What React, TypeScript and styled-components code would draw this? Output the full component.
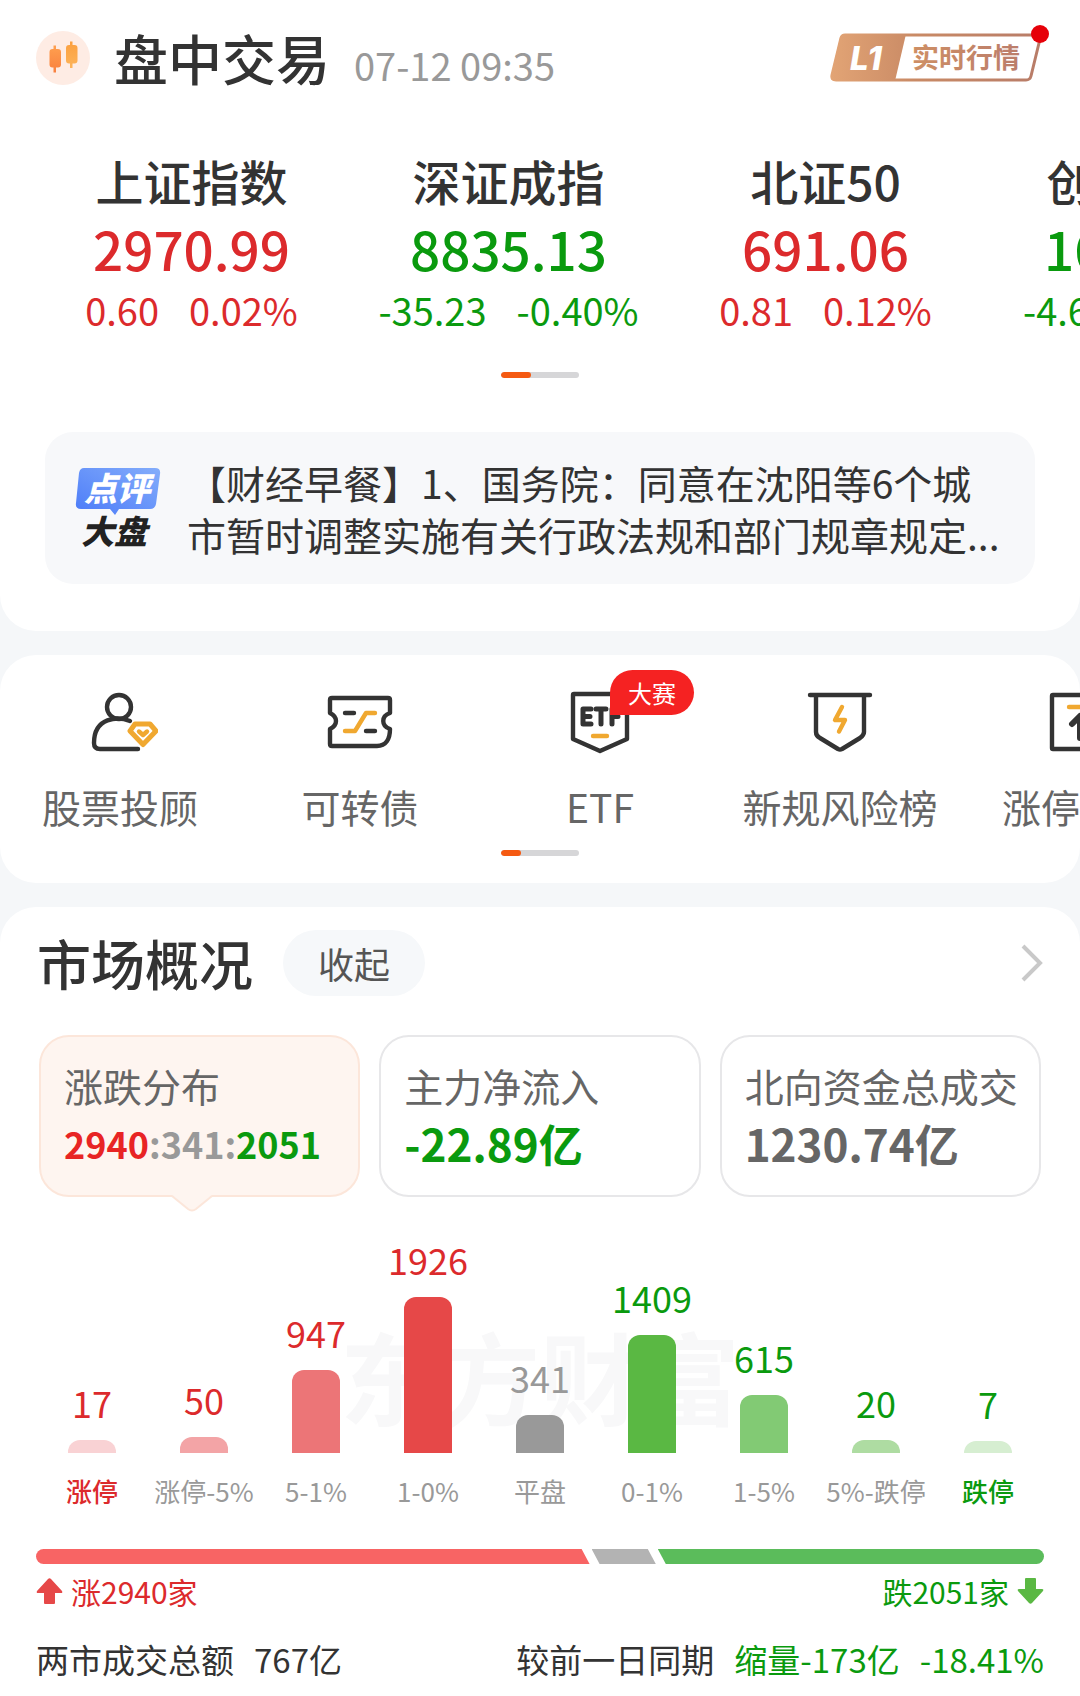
import React, { useState } from "react";
import styled, { createGlobalStyle } from "styled-components";

const RED = "#dc2a2c";
const GREEN = "#0a9a0e";
const INK = "#333333";
const GRAY = "#999999";

const toneColor = { up: RED, down: GREEN, flat: GRAY };
type Tone = keyof typeof toneColor;

const GlobalStyle = createGlobalStyle`
  *, *::before, *::after { box-sizing: border-box; }
  body {
    margin: 0;
    background: #f5f7f9;
    color: ${INK};
    font-family: "Noto Sans CJK SC", "Noto Sans", sans-serif;
    overflow-x: hidden;
  }
  button {
    font: inherit;
    color: inherit;
    background: none;
    border: 0;
    padding: 0;
    margin: 0;
    cursor: pointer;
  }
  a { color: inherit; text-decoration: none; }
  h1, h2, p, ul { margin: 0; padding: 0; }
  ul { list-style: none; }
  svg { display: block; flex: none; }
`;

const Page = styled.main`
  display: flex;
  flex-direction: column;
  gap: 24px;
`;

const Card = styled.section<{ $top?: boolean; $last?: boolean }>`
  background: #ffffff;
  overflow: hidden;
  border-radius: ${(p) => (p.$top ? "0 0 36px 36px" : p.$last ? "36px 36px 0 0" : "36px")};
`;

const Header = styled.header`
  display: flex;
  align-items: center;
  padding: 20px 36px 0;
  height: 96px;
`;

const HeaderText = styled.div`
  display: flex;
  align-items: baseline;
  gap: 24px;
  margin-left: 24px;
  flex: 1;
`;

const Title = styled.h1`
  font-size: 54px;
  line-height: 72px;
  font-weight: 500;
`;

const SectionTitle = styled(Title).attrs({ as: "h2" })``;

const Time = styled.time`
  font-size: 38px;
  line-height: 56px;
  color: ${GRAY};
`;

const LevelButton = styled.button`
  margin-right: -6px;
`;

const Scroller = styled.ul`
  display: flex;
  overflow-x: auto;
  scrollbar-width: none;
  &::-webkit-scrollbar { display: none; }
`;

const IndexScroller = styled(Scroller)`
  padding-left: 33px;
  margin-top: 50px;
`;

const IndexItem = styled.li`
  flex: 0 0 317px;
`;

const IndexLink = styled.a<{ $tone: Tone }>`
  display: flex;
  flex-direction: column;
  align-items: center;
  color: ${(p) => toneColor[p.$tone]};
`;

const IndexName = styled.span`
  font-size: 48px;
  line-height: 68px;
  font-weight: 500;
  color: ${INK};
`;

const IndexValue = styled.span`
  font-size: 53px;
  line-height: 68px;
  font-weight: 500;
`;

const IndexChange = styled.span`
  display: flex;
  gap: 30px;
  font-size: 38px;
  line-height: 56px;
`;

const Pager = styled.div<{ $space: number }>`
  width: 78px;
  height: 6px;
  margin: ${(p) => p.$space}px auto 0;
  border-radius: 3px;
  background: #d6d6d8;
  overflow: hidden;
`;

const PagerThumb = styled.div<{ $width: number }>`
  width: ${(p) => p.$width}px;
  height: 6px;
  border-radius: 3px;
  background: #f55a12;
`;

const News = styled.a`
  display: flex;
  align-items: center;
  gap: 24px;
  margin: 54px 45px 47px;
  padding: 24px 26px 24px 28px;
  border-radius: 28px;
  background: #f7f8fa;
`;

const NewsText = styled.p`
  flex: 1;
  min-width: 0;
  max-width: 820px;
  font-size: 39px;
  line-height: 52px;
  text-spacing-trim: space-all;
`;

const NavItem = styled.li`
  flex: 0 0 240px;
`;

const NavLink = styled.a`
  position: relative;
  display: flex;
  flex-direction: column;
  align-items: center;
  padding-top: 31px;
`;

const NavLabel = styled.span`
  margin-top: 16px;
  font-size: 39px;
  line-height: 56px;
  color: #666666;
  white-space: nowrap;
`;

const NavBadge = styled.span`
  position: absolute;
  top: 15px;
  left: 130px;
  width: 84px;
  border-radius: 23px 23px 23px 0;
  background: #f52222;
  color: #ffffff;
  font-size: 24px;
  line-height: 45px;
  text-align: center;
`;

const SectionHead = styled.div`
  display: flex;
  align-items: center;
  padding: 20px 36px 0 37px;
`;

const Fold = styled.button`
  margin-left: 30px;
  padding: 0 35px;
  border-radius: 33px;
  background: #f6f8fa;
  color: #555555;
  font-size: 36px;
  line-height: 66px;
`;

const MoreLink = styled.a`
  margin-left: auto;
`;

const Tabs = styled.div`
  display: grid;
  grid-template-columns: repeat(3, 1fr);
  gap: 19px;
  padding: 36px 39px 0;
`;

const Tab = styled.button<{ $active: boolean }>`
  position: relative;
  display: flex;
  flex-direction: column;
  align-items: flex-start;
  padding: 20px 0 22px 23px;
  border: 2px solid ${(p) => (p.$active ? "#fce6da" : "#e7e7e9")};
  border-radius: 30px;
  background: ${(p) => (p.$active ? "#fef5f0" : "#ffffff")};
  text-align: left;
  white-space: nowrap;
`;

const TabLabel = styled.span`
  font-size: 39px;
  line-height: 56px;
  color: #666666;
`;

const TabValue = styled.span<{ $color: string; $compact?: boolean }>`
  font-size: ${(p) => (p.$compact ? 36 : 44)}px;
  line-height: 60px;
  font-weight: 700;
  color: ${(p) => p.$color};
`;

const Part = styled.span<{ $tone: Tone }>`
  color: ${(p) => (p.$tone === "up" ? "#e82424" : toneColor[p.$tone])};
`;

const TabPointer = styled.svg`
  position: absolute;
  left: 50%;
  bottom: -18px;
  margin-left: -36px;
`;

const Chart = styled.div`
  position: relative;
  padding: 38px 36px 0;
`;

const Watermark = styled.span`
  position: absolute;
  left: 50%;
  bottom: 66px;
  transform: translateX(-50%);
  color: #f8f8f9;
  font-size: 100px;
  line-height: 140px;
  font-weight: 700;
  white-space: nowrap;
`;

const Bars = styled.ul`
  position: relative;
  display: grid;
  grid-template-columns: repeat(9, 1fr);
  align-items: end;
`;

const BarItem = styled.li`
  display: flex;
  flex-direction: column;
  align-items: center;
`;

const BarValue = styled.span<{ $tone: Tone }>`
  font-size: 36px;
  line-height: 48px;
  margin-bottom: 14px;
  color: ${(p) => toneColor[p.$tone]};
`;

const Bar = styled.div<{ $fill: string }>`
  width: 48px;
  border-radius: 12px 12px 0 0;
  background: ${(p) => p.$fill};
`;

const BarLabel = styled.span<{ $tone: Tone; $strong: boolean }>`
  margin-top: 18px;
  font-size: 26px;
  line-height: 40px;
  font-weight: ${(p) => (p.$strong ? 500 : 400)};
  color: ${(p) => toneColor[p.$tone]};
  white-space: nowrap;
`;

const Ratio = styled.div`
  display: flex;
  gap: 10px;
  height: 15px;
  margin: 38px 36px 0;
  border-radius: 8px;
  overflow: hidden;
`;

const RatioPart = styled.div<{ $fill: string; $place: "first" | "mid" | "last" }>`
  background: ${(p) => p.$fill};
  margin-left: ${(p) => (p.$place === "first" ? 0 : -8)}px;
  clip-path: ${(p) =>
    p.$place === "first"
      ? "polygon(0 0, calc(100% - 8px) 0, 100% 100%, 0 100%)"
      : p.$place === "mid"
      ? "polygon(0 0, calc(100% - 8px) 0, 100% 100%, 8px 100%)"
      : "polygon(0 0, 100% 0, 100% 100%, 8px 100%)"};
`;

const Row = styled.div<{ $space: number; $size: number }>`
  display: flex;
  justify-content: space-between;
  margin-top: ${(p) => p.$space}px;
  padding: 0 36px;
  font-size: ${(p) => p.$size}px;
  line-height: 48px;
`;

const Group = styled.span<{ $tone?: Tone; $gap: number }>`
  display: flex;
  align-items: center;
  gap: ${(p) => p.$gap}px;
  color: ${(p) => (p.$tone ? toneColor[p.$tone] : INK)};
`;

const Foot = styled.div<{ $height: number }>`
  height: ${(p) => p.$height}px;
`;

const indexes: { name: string; value: string; diff: string; pct: string; tone: Tone }[] = [
  { name: "上证指数", value: "2970.99", diff: "0.60", pct: "0.02%", tone: "up" },
  { name: "深证成指", value: "8835.13", diff: "-35.23", pct: "-0.40%", tone: "down" },
  { name: "北证50", value: "691.06", diff: "0.81", pct: "0.12%", tone: "up" },
  { name: "创业板指", value: "1678.35", diff: "-4.63", pct: "-0.28%", tone: "down" },
];

const bars: { label: string; count: number; height: number; fill: string; tone: Tone }[] = [
  { label: "涨停", count: 17, height: 13, fill: "#f9d2d4", tone: "up" },
  { label: "涨停-5%", count: 50, height: 16, fill: "#f3a4a6", tone: "up" },
  { label: "5-1%", count: 947, height: 83, fill: "#ec7577", tone: "up" },
  { label: "1-0%", count: 1926, height: 156, fill: "#e64848", tone: "up" },
  { label: "平盘", count: 341, height: 38, fill: "#999999", tone: "flat" },
  { label: "0-1%", count: 1409, height: 118, fill: "#5ab843", tone: "down" },
  { label: "1-5%", count: 615, height: 58, fill: "#82ca74", tone: "down" },
  { label: "5%-跌停", count: 20, height: 13, fill: "#aedca2", tone: "down" },
  { label: "跌停", count: 7, height: 12, fill: "#d6eed1", tone: "down" },
];

const CandleIcon = () => (
  <svg width="54" height="54" viewBox="0 0 54 54" aria-hidden="true">
    <defs>
      <linearGradient id="candleA" x1="0" y1="0" x2="0" y2="1">
        <stop offset="0" stopColor="#ffa04f" />
        <stop offset="1" stopColor="#f9803f" />
      </linearGradient>
      <linearGradient id="candleB" x1="0" y1="0" x2="0" y2="1">
        <stop offset="0" stopColor="#fb9f3e" />
        <stop offset="1" stopColor="#fdb45a" />
      </linearGradient>
    </defs>
    <circle cx="27" cy="27" r="27" fill="#feece4" />
    <path d="M17.500 14.500h2.500v3.500h2q3 0 3 3v12.500q0 3-3 3h-2v5h-2.500v-5h-1q-3 0-3-3V21q0-3 3-3h1z" fill="url(#candleA)" />
    <path d="M34 10.500h2.500V14h2q3 0 3 3v12.500q0 3-3 3h-2v4.500H34v-4.500h-1q-3 0-3-3V17q0-3 3-3h1z" fill="url(#candleB)" />
  </svg>
);

const LevelBadge = () => (
  <svg width="220" height="66" viewBox="0 2 220 66" aria-hidden="true">
    <defs>
      <linearGradient id="lv" x1="0" y1="0" x2="1" y2="0">
        <stop offset="0" stopColor="#e2a475" />
        <stop offset="0.400" stopColor="#c98a65" />
        <stop offset="1" stopColor="#b87c68" />
      </linearGradient>
      <linearGradient id="lvFill" x1="0" y1="0" x2="1" y2="0">
        <stop offset="0" stopColor="#e2a475" />
        <stop offset="1" stopColor="#cc8d67" />
      </linearGradient>
      <linearGradient id="lvText" x1="0" y1="0" x2="1" y2="0">
        <stop offset="0" stopColor="#ce8f64" />
        <stop offset="1" stopColor="#bb7d6c" />
      </linearGradient>
    </defs>
    <path d="M15 12H206q5 0 4 4L201 53q-1 4-5 4H6q-5 0-4-5L11 15q1-3 4-3z" fill="none" stroke="url(#lv)" strokeWidth="3" />
    <path d="M15 11H76L65 58H6q-6 0-5-5L10 15q1-4 5-4z" fill="url(#lvFill)" />
    <text x="20" y="47" fontFamily="Inter, sans-serif" fontSize="33" fontWeight="800" fontStyle="italic" fill="#ffffff">L1</text>
    <text x="82" y="45" fontSize="27" fontWeight="700" fill="url(#lvText)">实时行情</text>
    <circle cx="210" cy="11" r="9" fill="#e60009" />
  </svg>
);

const CommentIcon = () => (
  <svg width="90" height="90" viewBox="0 0 90 90" aria-hidden="true">
    <defs>
      <linearGradient id="talk" x1="0" y1="1" x2="1" y2="0">
        <stop offset="0" stopColor="#4b7bf8" />
        <stop offset="1" stopColor="#84adfb" />
      </linearGradient>
    </defs>
    <path d="M11 5H82q6 0 5 6L83 41q-1 5-6 5H46l-4 6-5-6H8q-6 0-5-6L6 10q1-5 5-5z" fill="url(#talk)" />
    <text x="11" y="38" fontSize="33" fontWeight="900" fontStyle="italic" fill="#ffffff">点评</text>
    <text x="8" y="81" fontSize="33" fontWeight="900" fontStyle="italic" fill="#222222">大盘</text>
  </svg>
);

const iconProps = {
  width: 76,
  height: 76,
  viewBox: "0 0 76 76",
  fill: "none",
  stroke: INK,
  strokeWidth: 4.4,
  strokeLinecap: "round" as const,
  strokeLinejoin: "round" as const,
  "aria-hidden": true,
};

const AdvisorIcon = () => (
  <svg {...iconProps}>
    <circle cx="37" cy="21" r="12" />
    <path d="M48 35C36 30 12 31 12 57q0 6 6 6H56" />
    <path d="M53 38H68L74 45 61 58.500 48 45z" stroke="#f0a830" strokeWidth="5" />
    <path d="M57 45.500L61 49L65 45.500" stroke="#f0a830" />
  </svg>
);

const BondIcon = () => (
  <svg {...iconProps}>
    <path d="M10 12H66q2 0 2 2V27c-9 3-9 13 0 16 0 10-4 17-13 17H10q-2 0-2-2V43c8-4 8-12 0-16V14q0-2 2-2z" />
    <path d="M23 27H32M44 45H53" />
    <path d="M23 45H33L44 27H53" stroke="#f0a830" />
  </svg>
);

const EtfIcon = () => (
  <svg {...iconProps}>
    <path d="M12 8H64q1 0 1 1V53L38 65 11 53V9q0-1 1-1z" />
    <g strokeWidth="5">
      <path d="M29 23H21V38H29M21 30.500H28" />
      <path d="M34 23H44M39 23V38" />
      <path d="M50 38V23H57M50 30.500H56" />
    </g>
    <path d="M31 50H45" stroke="#f0a830" />
  </svg>
);

const RiskIcon = () => (
  <svg {...iconProps}>
    <path d="M8 9H68M14 10V46q0 4 4 6L36 63q2 1 4 0L58 52q4-3 4-6V10" />
    <path d="M40 21L33 34H43L37 45.500" stroke="#f0a830" />
  </svg>
);

const LimitIcon = () => (
  <svg {...iconProps}>
    <path d="M11 9H65q1 0 1 1V62q0 1-1 1H11q-1 0-1-1V10q0-1 1-1z" />
    <path d="M27 21H49" stroke="#f0a830" />
    <path d="M38 52V31M30 38L38 30L46 38" strokeWidth="6" />
  </svg>
);

const navs = [
  { label: "股票投顾", Icon: AdvisorIcon },
  { label: "可转债", Icon: BondIcon },
  { label: "ETF", Icon: EtfIcon, badge: "大赛" },
  { label: "新规风险榜", Icon: RiskIcon },
  { label: "涨停复盘", Icon: LimitIcon },
];

const Arrow = ({ down }: { down?: boolean }) => (
  <svg width="27" height="28" viewBox="0 0 27 28" aria-hidden="true">
    <path
      d={
        down
          ? "M9 1h9q1 0 1 1v10h6q2 0 1 2L15 26q-1.500 1.500-3 0L1 14q-1-2 1-2h6V2q0-1 1-1z"
          : "M9 27h9q1 0 1-1V16h6q2 0 1-2L15 2q-1.500-1.500-3 0L1 14q-1 2 1 2h6v10q0 1 1 1z"
      }
      fill={down ? "#5ab843" : "#e64848"}
    />
  </svg>
);

export default function App() {
  const [tab, setTab] = useState(0);
  const pointer = (
    <TabPointer width="56" height="18" viewBox="0 0 56 18" aria-hidden="true">
      <path d="M8 0L24 14q4 3 8 0L48 0z" fill="#fef5f0" />
      <path d="M8 1L24 14q4 3 8 0L48 1" fill="none" stroke="#fce6da" strokeWidth="2" />
    </TabPointer>
  );

  return (
    <>
      <GlobalStyle />
      <Page lang="zh-CN">
        <Card $top>
          <Header>
            <CandleIcon />
            <HeaderText>
              <Title>盘中交易</Title>
              <Time>07-12 09:35</Time>
            </HeaderText>
            <LevelButton type="button" aria-label="L1 实时行情">
              <LevelBadge />
            </LevelButton>
          </Header>
          <IndexScroller>
            {indexes.map((it) => (
              <IndexItem key={it.name}>
                <IndexLink href="#index" $tone={it.tone}>
                  <IndexName>{it.name}</IndexName>
                  <IndexValue>{it.value}</IndexValue>
                  <IndexChange>
                    <span>{it.diff}</span>
                    <span>{it.pct}</span>
                  </IndexChange>
                </IndexLink>
              </IndexItem>
            ))}
          </IndexScroller>
          <Pager $space={34}>
            <PagerThumb $width={30} />
          </Pager>
          <News href="#news">
            <CommentIcon />
            <NewsText>【财经早餐】1、国务院：同意在沈阳等6个城市暂时调整实施有关行政法规和部门规章规定...</NewsText>
          </News>
        </Card>

        <Card as="nav">
          <Scroller>
            {navs.map(({ label, Icon, badge }) => (
              <NavItem key={label}>
                <NavLink href="#nav">
                  <Icon />
                  {badge && <NavBadge>{badge}</NavBadge>}
                  <NavLabel>{label}</NavLabel>
                </NavLink>
              </NavItem>
            ))}
          </Scroller>
          <Pager $space={16}>
            <PagerThumb $width={20} />
          </Pager>
          <Foot $height={27} />
        </Card>

        <Card $last>
          <SectionHead>
            <SectionTitle>市场概况</SectionTitle>
            <Fold type="button">收起</Fold>
            <MoreLink href="#market" aria-label="更多">
              <svg width="24" height="40" viewBox="0 0 24 40" fill="none" stroke="#c9c9c9" strokeWidth="4">
                <path d="M3 3L20 20L3 37" />
              </svg>
            </MoreLink>
          </SectionHead>
          <Tabs role="tablist">
            <Tab type="button" role="tab" aria-selected={tab === 0} $active={tab === 0} onClick={() => setTab(0)}>
              <TabLabel>涨跌分布</TabLabel>
              <TabValue $color={GRAY} $compact>
                <Part $tone="up">2940</Part>:341:<Part $tone="down">2051</Part>
              </TabValue>
              {tab === 0 && pointer}
            </Tab>
            <Tab type="button" role="tab" aria-selected={tab === 1} $active={tab === 1} onClick={() => setTab(1)}>
              <TabLabel>主力净流入</TabLabel>
              <TabValue $color={GREEN}>-22.89亿</TabValue>
              {tab === 1 && pointer}
            </Tab>
            <Tab type="button" role="tab" aria-selected={tab === 2} $active={tab === 2} onClick={() => setTab(2)}>
              <TabLabel>北向资金总成交</TabLabel>
              <TabValue $color="#666666">1230.74亿</TabValue>
              {tab === 2 && pointer}
            </Tab>
          </Tabs>
          <Chart>
            <Watermark aria-hidden="true">东方财富</Watermark>
            <Bars>
              {bars.map((b) => (
                <BarItem key={b.label}>
                  <BarValue $tone={b.tone}>{b.count}</BarValue>
                  <Bar $fill={b.fill} style={{ height: b.height }} />
                  <BarLabel
                    $tone={b.label === "涨停" || b.label === "跌停" ? b.tone : "flat"}
                    $strong={b.label === "涨停" || b.label === "跌停"}
                  >
                    {b.label}
                  </BarLabel>
                </BarItem>
              ))}
            </Bars>
          </Chart>
          <Ratio>
            <RatioPart $fill="#f86464" $place="first" style={{ flex: 2940 }} />
            <RatioPart $fill="#b3b3b3" $place="mid" style={{ flex: 341 }} />
            <RatioPart $fill="#5bbc5b" $place="last" style={{ flex: 2051 }} />
          </Ratio>
          <Row $space={3} $size={30}>
            <Group $tone="up" $gap={8}>
              <Arrow />
              涨2940家
            </Group>
            <Group $tone="down" $gap={8}>
              跌2051家
              <Arrow down />
            </Group>
          </Row>
          <Row $space={20} $size={33}>
            <Group $gap={20}>
              <span>两市成交总额</span>
              <span>767亿</span>
            </Group>
            <Group $gap={20}>
              <span>较前一日同期</span>
              <Group $tone="down" $gap={20}>
                <span>缩量-173亿</span>
                <span>-18.41%</span>
              </Group>
            </Group>
          </Row>
          <Foot $height={15} />
        </Card>
      </Page>
    </>
  );
}
